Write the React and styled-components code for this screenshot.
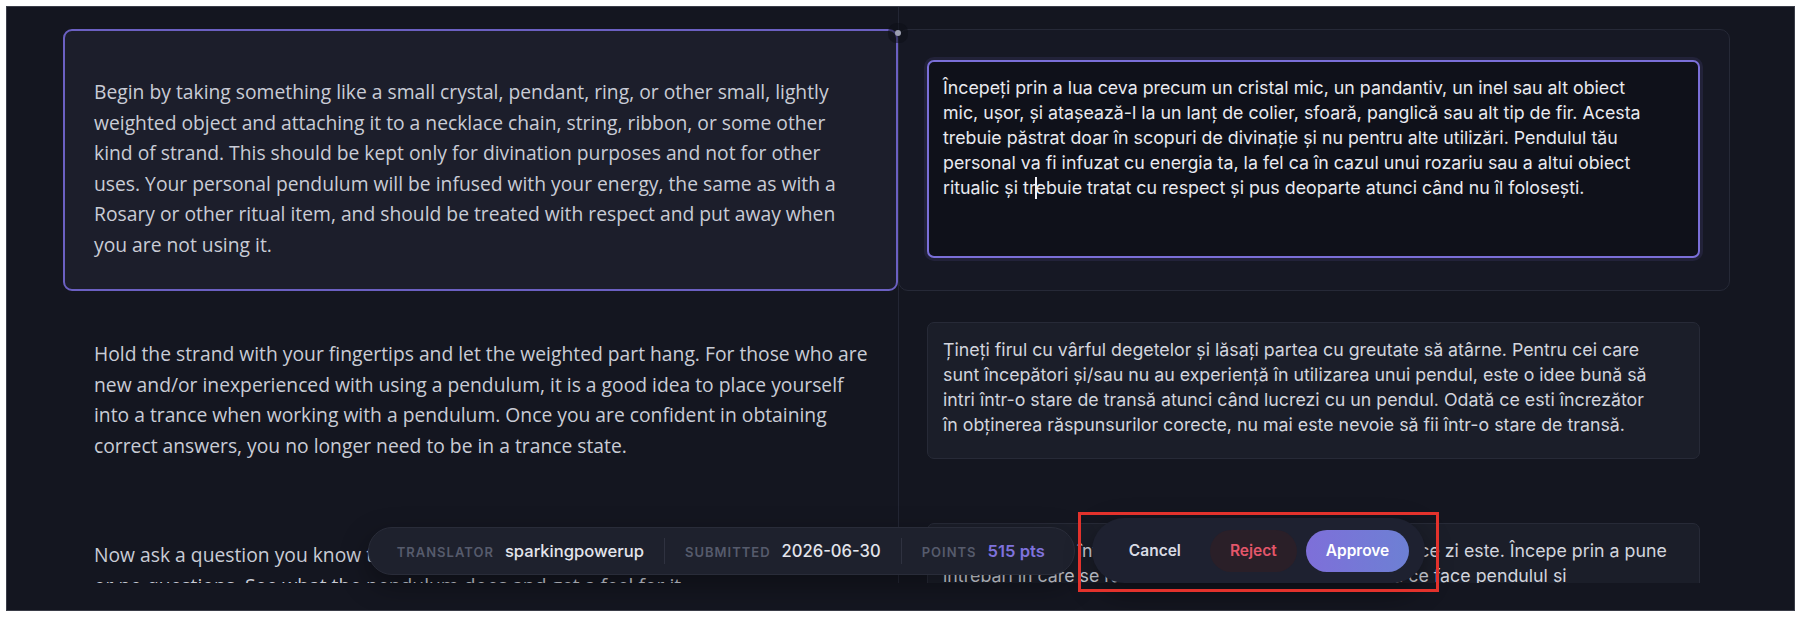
import React from 'react';
import styled, { createGlobalStyle, css } from 'styled-components';

const GlobalStyle = createGlobalStyle`
  *, *::before, *::after { box-sizing: border-box; }
  html, body { margin: 0; padding: 0; background: #ffffff; }
  body { font-family: "Open Sans", "Noto Sans", sans-serif; }
`;

const Frame = styled.div`
  position: relative;
  margin: 6px 5px 0 6px;
  height: 605px;
  background: #141620;
  border: 1px solid #3a3d48;
  overflow: hidden;
`;

const Viewport = styled.div`
  height: 576px;
  overflow: hidden;
`;

const Rows = styled.div`
  width: 1667px;
  min-height: 100%;
  margin-left: 56px;
  padding-top: 22px;
  background: linear-gradient(
    to right,
    transparent 835px,
    #232634 835px,
    #232634 836px,
    transparent 836px
  );
`;

const Row = styled.div`
  display: grid;
  grid-template-columns: 835px 832px;
`;

const SourceCell = styled.div`
  border: 2px solid ${(p) => (p.$active ? '#6b60c2' : 'transparent')};
  border-radius: 9px;
  background: ${(p) => (p.$active ? '#1c1e2b' : 'transparent')};
  padding: 46px 4px 29px 29px;
  font-family: "Open Sans", "Noto Sans", sans-serif;
  font-size: 19.3px;
  line-height: 30.5px;
  color: #c9ccd6;
  white-space: pre-line;
`;

const TargetCell = styled.div`
  position: relative;
  border: 1px solid ${(p) => (p.$active ? '#262937' : 'transparent')};
  border-radius: 10px;
  background: ${(p) => (p.$active ? '#161824' : 'transparent')};
  padding: 30px 29px 31px 28px;
`;

const Knob = styled.span`
  position: absolute;
  left: -4px;
  top: 0;
  width: 6px;
  height: 6px;
  border-radius: 50%;
  background: #9c9fb0;
  box-shadow: 0 0 0 7px rgba(12, 14, 22, 0.5);
`;

const targetText = css`
  font-family: Inter, "Noto Sans", sans-serif;
  font-size: 17.8px;
  line-height: 25px;
  white-space: pre-line;
`;

const Editor = styled.div`
  ${targetText};
  height: 198px;
  border: 2px solid #7a6fd8;
  border-radius: 7px;
  background: #0f111a;
  padding: 13px 12px 13px 14px;
  color: #e9eaf0;
  box-shadow: 0 0 0 3px rgba(122, 111, 216, 0.12);
`;

const Caret = styled.span`
  display: inline-block;
  width: 2px;
  height: 22px;
  margin: 0 -1px;
  vertical-align: -5px;
  background: #f2f2f7;
`;

const Segment = styled.div`
  ${targetText};
  border: 1px solid #272a37;
  border-radius: 7px;
  background: #1b1e29;
  padding: 14px 8px 21px 15px;
  color: #d2d5de;
`;

const Toolbar = styled.div`
  position: absolute;
  left: 56px;
  width: 1667px;
  bottom: 27px;
  display: flex;
  justify-content: center;
  align-items: center;
  gap: 17px;
  font-family: Inter, "Noto Sans", sans-serif;
`;

const InfoPill = styled.div`
  display: flex;
  align-items: center;
  height: 48px;
  padding: 0 29px 0 28px;
  background: #1e212d;
  border: 1px solid #292c39;
  border-radius: 24px;
  box-shadow: 0 10px 28px rgba(0, 0, 0, 0.35);
`;

const Field = styled.div`
  display: flex;
  align-items: baseline;
  gap: 11px;
`;

const Label = styled.span`
  font-size: 13px;
  font-weight: 600;
  letter-spacing: 1px;
  text-transform: uppercase;
  color: #565b6c;
`;

const Value = styled.span`
  font-size: 16.6px;
  font-weight: ${(p) => (p.$accent ? 600 : 500)};
  color: ${(p) => (p.$accent ? '#7f72dc' : '#e3e5ec')};
`;

const Sep = styled.span`
  width: 1px;
  height: 26px;
  margin: 0 20px;
  background: #2f3240;
`;

const ActionsPill = styled.div`
  position: relative;
  display: flex;
  align-items: center;
  gap: 9px;
  height: 65px;
  padding: 0 16px 0 17px;
  background: #1e2130;
  border-radius: 33px;
  box-shadow: 0 10px 28px rgba(0, 0, 0, 0.4);
`;

const variants = {
  ghost: css`
    background: transparent;
    color: #d9dbe4;
  `,
  danger: css`
    background: #2a1f28;
    color: #e4566a;
  `,
  primary: css`
    background: linear-gradient(90deg, #7e6fd9, #6d80d4);
    color: #ffffff;
  `,
};

const ActionButton = styled.button`
  height: 42px;
  padding: 0 20px;
  border: none;
  border-radius: 21px;
  font-family: Inter, "Noto Sans", sans-serif;
  font-size: 15.5px;
  font-weight: 600;
  cursor: pointer;
  ${(p) => variants[p.$variant]}
`;

const Annotation = styled.div`
  position: absolute;
  left: -14px;
  right: -14px;
  top: -6px;
  bottom: -9px;
  border: 3px solid #e3322c;
  pointer-events: none;
`;

const segments = [
  {
    source:
      'Begin by taking something like a small crystal, pendant, ring, or other small, lightly\n' +
      'weighted object and attaching it to a necklace chain, string, ribbon, or some other\n' +
      'kind of strand. This should be kept only for divination purposes and not for other\n' +
      'uses. Your personal pendulum will be infused with your energy, the same as with a\n' +
      'Rosary or other ritual item, and should be treated with respect and put away when\n' +
      'you are not using it.',
    target: [
      'Începeți prin a lua ceva precum un cristal mic, un pandantiv, un inel sau alt obiect\n' +
        'mic, ușor, și atașează-l la un lanț de colier, sfoară, panglică sau alt tip de fir. Acesta\n' +
        'trebuie păstrat doar în scopuri de divinație și nu pentru alte utilizări. Pendulul tău\n' +
        'personal va fi infuzat cu energia ta, la fel ca în cazul unui rozariu sau a altui obiect\n' +
        'ritualic și tr',
      'ebuie tratat cu respect și pus deoparte atunci când nu îl folosești.',
    ],
    active: true,
  },
  {
    source:
      'Hold the strand with your fingertips and let the weighted part hang. For those who are\n' +
      'new and/or inexperienced with using a pendulum, it is a good idea to place yourself\n' +
      'into a trance when working with a pendulum. Once you are confident in obtaining\n' +
      'correct answers, you no longer need to be in a trance state.',
    target:
      'Țineți firul cu vârful degetelor și lăsați partea cu greutate să atârne. Pentru cei care\n' +
      'sunt începători și/sau nu au experiență în utilizarea unui pendul, este o idee bună să\n' +
      'intri într-o stare de transă atunci când lucrezi cu un pendul. Odată ce esti încrezător\n' +
      'în obținerea răspunsurilor corecte, nu mai este nevoie să fii într-o stare de transă.',
  },
  {
    source:
      'Now ask a question you know the answer to, such as what day it is. Start by asking yes\n' +
      'or no questions. See what the pendulum does and get a feel for it.',
    target:
      'Acum pune-ți o întrebare la care știi răspunsul, cum ar fi ce zi este. Începe prin a pune\n' +
      'întrebări în care se răspunde cu un da sau nu. Observă ce face pendulul și\n' +
      'fă-ți o idee despre cum se mișcă.',
  },
];

export default function App() {
  return (
    <>
      <GlobalStyle />
      <Frame>
        <Viewport>
          <Rows>
            {segments.map((seg, i) => (
              <Row key={i}>
                <SourceCell $active={seg.active}>{seg.source}</SourceCell>
                <TargetCell $active={seg.active}>
                  {seg.active ? (
                    <>
                      <Knob />
                      <Editor>
                        {seg.target[0]}
                        <Caret />
                        {seg.target[1]}
                      </Editor>
                    </>
                  ) : (
                    <Segment>{seg.target}</Segment>
                  )}
                </TargetCell>
              </Row>
            ))}
          </Rows>
        </Viewport>

        <Toolbar>
          <InfoPill>
            <Field>
              <Label>Translator</Label>
              <Value>sparkingpowerup</Value>
            </Field>
            <Sep />
            <Field>
              <Label>Submitted</Label>
              <Value>2026-06-30</Value>
            </Field>
            <Sep />
            <Field>
              <Label>Points</Label>
              <Value $accent>515 pts</Value>
            </Field>
          </InfoPill>
          <ActionsPill>
            <ActionButton $variant="ghost">Cancel</ActionButton>
            <ActionButton $variant="danger">Reject</ActionButton>
            <ActionButton $variant="primary">Approve</ActionButton>
            <Annotation />
          </ActionsPill>
        </Toolbar>
      </Frame>
    </>
  );
}
